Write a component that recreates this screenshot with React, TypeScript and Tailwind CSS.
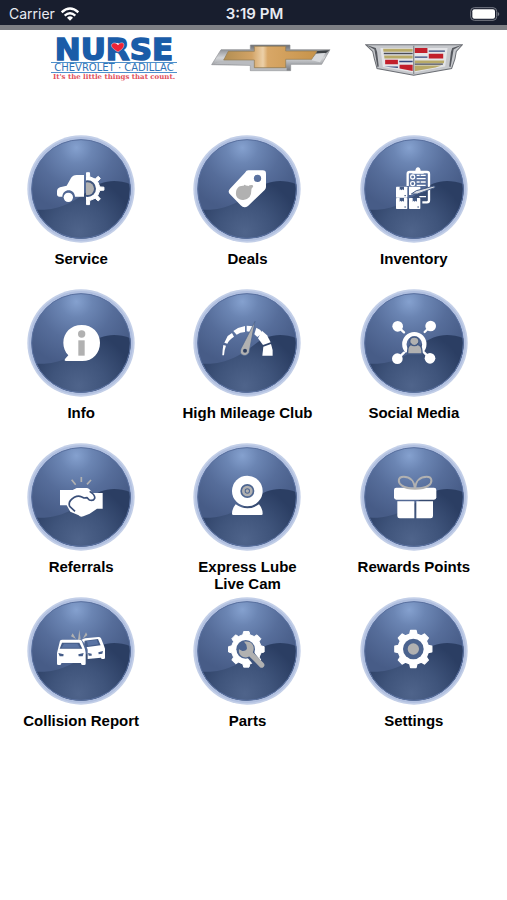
import type { ReactNode } from 'react';

const WHITE = '#ffffff';
const GREY = '#b1b1b1';

/** Builds the outline of a gear with flat, tapered teeth. */
function gearPath(cx: number, cy: number, outer: number, inner: number, teeth: number, tip = 0.19, base = 0.3): string {
  const step = (Math.PI * 2) / teeth;
  const points: string[] = [];
  for (let i = 0; i < teeth; i++) {
    const a = i * step - Math.PI / 2;
    const corners: [number, number][] = [
      [inner, -base],
      [outer, -tip],
      [outer, tip],
      [inner, base],
    ];
    corners.forEach(([r, f]) => {
      const t = a + f * step;
      points.push(`${(cx + r * Math.cos(t)).toFixed(1)} ${(cy + r * Math.sin(t)).toFixed(1)}`);
    });
  }
  return `M${points.join('L')}Z`;
}

function ServiceIcon() {
  return (
    <g transform="translate(-21 -15)" fill={WHITE}>
      <path d="M192 135h-22c-8 0-13 3-17 9l-13 23-20 5c-6 2-9 6-9 12v9c0 5 3 7 7 7h9c1-12 9-19 19-19s18 7 19 19h27z" />
      <circle cx="145" cy="202" r="14" />
      <clipPath id="half-gear">
        <rect x="198" y="120" width="70" height="110" />
      </clipPath>
      <g clipPath="url(#half-gear)">
        <path d={gearPath(204, 176, 48, 36, 8, 0.12, 0.18)} stroke={WHITE} strokeWidth="3" strokeLinejoin="round" />
        <circle cx="203" cy="176" r="25" fill="#40567f" />
        <circle cx="203" cy="176" r="19" fill={GREY} />
      </g>
    </g>
  );
}

function DealsIcon() {
  return (
    <g transform="translate(-24 -15)">
      <path
        fill={WHITE}
        fillRule="evenodd"
        d="M190 121h43q10 0 10 10v40q0 5-4 9l-50 48q-12 8-22-2l-32-33q-8-8 0-17l45-48q4-7 10-7zM217 134a11 11 0 1 0 1 22 11 11 0 0 0-1-22z"
      />
      <path
        fill={GREY}
        d="M176 167q3-5 7 0 5-2 6 2 5-5 13-4c4 2 3 7-1 9q-2 3-2 7 1 27-24 29c-15 1-24-10-22-23 1-12 8-21 23-20z"
      />
    </g>
  );
}

function Carton({ x, y }: { x: number; y: number }) {
  return (
    <g transform={`translate(${x} ${y})`}>
      <rect width="34" height="33" rx="2" fill={WHITE} />
      <path d="M11 0h13v11l-4-3-3 3-3-3-3 3z" fill="#435a84" />
      <path d="M25 27h5" stroke="#435a84" strokeWidth="3" />
    </g>
  );
}

function InventoryIcon() {
  return (
    <g transform="translate(-27 -15)">
      <path d="M170 168v-36q0-6 6-6h52q6 0 6 6v79q0 6-6 6h-14" fill="none" stroke={WHITE} strokeWidth="7" />
      <path d="M184 131v-8h9q1-11 8-11t8 11h9v8z" fill={WHITE} />
      <g fill="none" stroke={WHITE} strokeWidth="4">
        <rect x="179" y="135" width="12" height="12" rx="5" />
        <rect x="179" y="155" width="12" height="12" rx="5" />
        <path d="M197 136h9M209 136h15M197 146h27M197 156h9M209 156h15M197 166h27M205 200h20" />
      </g>
      <Carton x={135} y={170} />
      <Carton x={135} y={204} />
      <Carton x={174} y={204} />
      <path d="M174 170h34v13l-26 12h-8z" fill={WHITE} />
      <path d="m181 192 15-10 53-14q5 1 2 5l-52 19z" fill="#d9dce3" stroke="#435a84" strokeWidth="3" />
    </g>
  );
}

function InfoIcon() {
  return (
    <g transform="translate(-21 -12)">
      <path
        fill={WHITE}
        d="M185 120c32 0 55 23 55 53 0 31-21 55-53 55h-49c-4 0-5-3-3-6l10-11c-10-10-15-24-15-38 0-30 23-53 55-53z"
      />
      <circle cx="185" cy="147" r="11" fill={GREY} />
      <rect x="175" y="166" width="19" height="46" fill={GREY} />
    </g>
  );
}

function MileageIcon() {
  return (
    <g transform="translate(-24 -12)">
      <g fill={WHITE}>
        <path d="m112 211 1-17 2-14 8 2-4 14-2 15z" />
        <path d="m118 173 10-20 13-9 6 11q-16 11-20 21z" />
        <path d="m145 138 14-9 21-6v18q-15 1-25 8z" />
        <path d="m185 122 21 2-5 18-16-3z" />
        <path d="m214 128 12 7 6 10-15 11-9-8z" />
        <path d="m231 137 15 14 11 21-23 8-15-20z" />
        <path d="m235 185 23-8q7 18 5 35h-31z" />
      </g>
      <path d="m210 109-42 82q-5 13 3 18 12 7 21-6z" fill={GREY} stroke="#47608d" strokeWidth="2" />
      <circle cx="180" cy="197" r="6" fill="#2f4060" />
    </g>
  );
}

function SocialIcon() {
  return (
    <g transform="translate(-27 -12)">
      <g stroke={WHITE} strokeWidth="7" strokeLinecap="round">
        <path d="m140 124 19 18M239 123l-18 18M140 221l19-18M237 220l-18-18" />
      </g>
      <g fill={WHITE}>
        <circle cx="140" cy="124" r="16" />
        <circle cx="239" cy="123" r="16" />
        <circle cx="139" cy="221" r="16" />
        <circle cx="237" cy="220" r="16" />
      </g>
      <path d="M169 199a30 30 0 1 1 42 0" fill="none" stroke={WHITE} strokeWidth="13" />
      <path
        d="M170 207v-9q0-17 11-20-5-3-5-10 1-12 14-12t14 12q0 7-5 10 14 3 14 21v8z"
        fill={GREY}
        stroke="#435a84"
        strokeWidth="4"
        strokeLinejoin="round"
      />
      <path d="M178 176q12 12 24 0" fill="none" stroke="#435a84" strokeWidth="4" />
    </g>
  );
}

function ReferralsIcon() {
  return (
    <g transform="translate(-21 -9)">
      <g stroke={GREY} strokeWidth="5">
        <path d="m155 119 12 15M184 111v15M213 120l-12 13" />
      </g>
      <path
        fill={WHITE}
        d="M120 150h38l12-6h30q8 0 16 14l2 1h30v47h-17l-22 15-19 8q-9 4-14-3l-25-11-11-19h-20z"
      />
      <path
        fill="none"
        stroke="#3a4f79"
        strokeWidth="5"
        strokeLinejoin="round"
        d="M149 199c-4-10 2-20 14-27 7-4 14-5 21-2l8 4 9-1 7 7q12 4 16-5c2-8-4-14-15-21M149 199l16 15"
      />
    </g>
  );
}

function CameraIcon() {
  return (
    <g transform="translate(-24 -9)">
      <circle cx="187" cy="153" r="46" fill={WHITE} />
      <circle cx="187" cy="153" r="21" fill="#4e6690" />
      <circle cx="187" cy="153" r="12" fill="none" stroke={GREY} strokeWidth="8" />
      <circle cx="187" cy="153" r="5" fill={GREY} />
      <path fill={WHITE} d="M152 193q35 24 70 0 11 13 11 28 0 4-4 4h-84q-4 0-4-4 0-15 11-28z" />
    </g>
  );
}

function GiftIcon() {
  return (
    <g transform="translate(-522 -9)">
      <g fill={WHITE}>
        <rect x="624" y="143" width="127" height="36" rx="7" />
        <path d="M634 184h51v51h-44q-7 0-7-7zM691 184h50v44q0 7-7 7h-43z" />
      </g>
      <path
        fill="none"
        stroke={GREY}
        strokeWidth="6"
        strokeLinejoin="round"
        d="M687 146c-2-24-16-36-34-36-19 0-18 19-5 27 10 7 24 9 39 9zM687 146c2-24 16-36 35-36 18 0 18 18 5 27-10 7-25 9-40 9z"
      />
    </g>
  );
}

function CollisionIcon() {
  return (
    <g transform="translate(-21 -6)">
      <path d="m158 115 10 17-15-8zM178 104l4 29-8 2zM198 112l-10 20 14-12z" fill={GREY} />
      <g fill={WHITE}>
        <path d="M120 137q2-3 7-3h51q5 0 7 3l10 26 2 10v33q0 4-4 4h-6q-4 0-4-5v-1h-59v1q0 5-4 5h-5q-4 0-4-4v-32l3-12z" />
        <path d="m185 134 10-4 40-4q6 0 8 4l9 22 3 9v27q0 4-4 4h-4q-4 0-4-4l-40 4v-28l-5-13z" />
      </g>
      <g fill="#455d89">
        <path d="m126 143-7 18h68l-9-18zM194 137l-1 7 4 13 45-6-8-19z" />
        <path d="m115 174 16 4-1 6h-11zM191 174l-16 4 1 6h12zM204 174l11 2v6h-9zM249 168l-14 4 1 6 11-2z" />
      </g>
      <path d="m132 146-7 12h55l-8-12zM201 138l3 14 31-4-5-13z" fill="#5a74a4" />
    </g>
  );
}

function PartsIcon() {
  return (
    <g transform="translate(-24 -6)">
      <path d={gearPath(184, 163, 54, 45, 8)} fill={WHITE} stroke={WHITE} strokeWidth="3" strokeLinejoin="round" />
      <circle cx="182" cy="163" r="28" fill="#4c6490" />
      <path d="m185 165 45 55" stroke="#3e547e" strokeWidth="25" />
      <path d="m191 171 39 39" stroke={GREY} strokeWidth="16" strokeLinecap="round" />
      <path
        fill={GREY}
        d="M177 140c17-4 31 7 29 23-2 15-14 27-29 24-11-3-17-13-15-24l10 5q12 1 14-8l-2-11z"
      />
    </g>
  );
}

function SettingsIcon() {
  return (
    <g transform="translate(-522 -6)">
      <path d={gearPath(682, 162, 56, 46, 8)} fill={WHITE} stroke={WHITE} strokeWidth="4" strokeLinejoin="round" />
      <circle cx="682" cy="162" r="31" fill="#4b638e" />
      <circle cx="682" cy="162" r="17" fill={GREY} />
    </g>
  );
}

type Tile = { label: string; icon: ReactNode };

const tiles: Tile[] = [
  { label: 'Service', icon: <ServiceIcon /> },
  { label: 'Deals', icon: <DealsIcon /> },
  { label: 'Inventory', icon: <InventoryIcon /> },
  { label: 'Info', icon: <InfoIcon /> },
  { label: 'High Mileage Club', icon: <MileageIcon /> },
  { label: 'Social Media', icon: <SocialIcon /> },
  { label: 'Referrals', icon: <ReferralsIcon /> },
  { label: 'Express Lube Live Cam', icon: <CameraIcon /> },
  { label: 'Rewards Points', icon: <GiftIcon /> },
  { label: 'Collision Report', icon: <CollisionIcon /> },
  { label: 'Parts', icon: <PartsIcon /> },
  { label: 'Settings', icon: <SettingsIcon /> },
];

function BadgeGradients() {
  return (
    <svg className="absolute size-0" aria-hidden="true">
      <defs>
        <radialGradient id="badge-sky" gradientUnits="userSpaceOnUse" cx="148" cy="38" r="190">
          <stop offset="0" stopColor="#85a1cf" />
          <stop offset="0.25" stopColor="#6b85b3" />
          <stop offset="0.6" stopColor="#566d9a" />
          <stop offset="1" stopColor="#475c87" />
        </radialGradient>
        <radialGradient id="badge-wave" gradientUnits="userSpaceOnUse" cx="155" cy="290" r="165">
          <stop offset="0" stopColor="#4f648b" />
          <stop offset="0.5" stopColor="#3f547b" />
          <stop offset="1" stopColor="#2b3e63" />
        </radialGradient>
        <clipPath id="badge-face">
          <circle cx="162" cy="162" r="149" />
        </clipPath>
      </defs>
    </svg>
  );
}

function Badge({ children }: { children: ReactNode }) {
  return (
    <svg viewBox="0 0 324 324" className="size-[108px]" aria-hidden="true">
      <circle cx="162" cy="162" r="161" fill="#c3cfe8" />
      <circle cx="162" cy="162" r="156" fill="#b1c0e0" />
      <g clipPath="url(#badge-face)">
        <circle cx="162" cy="162" r="149" fill="url(#badge-sky)" />
        <path
          d="M0 220q22 6 52 4c60-4 94-29 132-57 38-29 80-40 140-14v171H0z"
          fill="url(#badge-wave)"
        />
      </g>
      <circle cx="162" cy="162" r="148" fill="none" stroke="#5a71a0" strokeWidth="3" />
      {children}
    </svg>
  );
}

function NurseLogo() {
  return (
    <svg viewBox="0 -8 126 51" className="h-[51px] w-[126px]" role="img" aria-label="Nurse Chevrolet Cadillac">
      <text
        x="63"
        y="22"
        textAnchor="middle"
        className="font-['DejaVu_Sans',sans-serif] text-[31px] font-bold"
        fill="#1a5ca8"
        stroke="#1a5ca8"
        strokeWidth="1.5"
      >
        NURSE
      </text>
      <path d="M67 14c-5-3-8-6-6-8s5-1 6 1c2-3 6-3 6 0s-3 5-6 7z" fill="#ee2436" stroke="#ffffff" strokeWidth="0.4" />
      <path d="M0 24.500h126M0 34.500h126" stroke="#4e90cb" strokeWidth="1" />
      <text
        x="63"
        y="33"
        textAnchor="middle"
        className="font-['DejaVu_Sans',sans-serif] text-[10px]"
        fill="#2f74b8"
      >
        CHEVROLET · CADILLAC
      </text>
      <text
        x="63"
        y="41"
        textAnchor="middle"
        className="font-['DejaVu_Serif',serif] text-[7px] font-bold"
        fill="#e2515c"
      >
        It's the little things that count.
      </text>
    </svg>
  );
}

function ChevroletLogo() {
  return (
    <svg viewBox="0 0 360 90" className="h-[30px] w-[120px]" role="img" aria-label="Chevrolet">
      <defs>
        <linearGradient id="chrome" x1="0" y1="0" x2="0" y2="1">
          <stop offset="0" stopColor="#6c6e73" />
          <stop offset="0.5" stopColor="#d3d5d8" />
          <stop offset="1" stopColor="#77797e" />
        </linearGradient>
        <linearGradient id="bowtie-gold" x1="0" y1="0" x2="1" y2="0">
          <stop offset="0" stopColor="#b28e52" />
          <stop offset="0.3" stopColor="#d2a366" />
          <stop offset="0.42" stopColor="#ecd0a8" />
          <stop offset="0.47" stopColor="#d8a767" />
          <stop offset="1" stopColor="#c79349" />
        </linearGradient>
      </defs>
      <path
        d="M2 65 30 20h88V6h119v14h120l-25 44h-93v19H118V67z"
        fill="url(#chrome)"
        stroke="#8c8e92"
        strokeWidth="2"
      />
      <path d="m10 62 28-9h92v22h97v8H118V66z" fill="#b9bbbf" />
      <path d="M38 51 52 25h78V10h94v14h95l-17 25h-78v25h-94V51z" fill="url(#bowtie-gold)" stroke="#8f7a52" strokeWidth="2" />
      <path d="m319 24 36-2-10 8-30 2z" fill="#3e4246" />
      <path d="m316 32 27-2-16 28-25-6z" fill="#d8dadd" />
    </svg>
  );
}

function CadillacLogo() {
  return (
    <svg viewBox="0 0 292 98" className="h-[33px] w-[98px]" role="img" aria-label="Cadillac">
      <path d="M2 5h288l-18 20-4 22-10 29-113 20L36 76 28 47l-5-22z" fill="#c6c8cc" stroke="#6c6f75" strokeWidth="3" />
      <path d="m2 5 26 14 9 52 4-1-5-43-4-12zM290 5l-26 14-9 52-4-1 5-43 4-12z" fill="#55585e" />
      <path d="M46 15h200l-7 55-94 18-92-17z" fill="#e4e5e8" />
      <path d="M54 17h88v9H55zM57 37h85v9H58zM148 52h88l-1 8h-87zM148 67h80l-18 6-62 11z" fill="#b8aa68" />
      <path d="M56 29h86v4H56zM148 61h84v4h-84z" fill="#4a4c55" />
      <path d="M148 15h38v15h-38zM190 32h43v14h-43zM60 50h38v13H60zM103 65h39v18l-39-7z" fill="#c21f2b" />
      <path d="M190 22h48v4h-48zM148 40h38v4h-38zM102 53h40v4h-40zM57 70h41v4z" fill="#34477d" />
      <path d="M145 8v84" stroke="#8b8e93" strokeWidth="4" />
    </svg>
  );
}

function StatusBar() {
  return (
    <div className="grid h-[30px] grid-cols-3 items-center border-b-[5px] border-[#7d7f84] bg-[#181e2e] pr-[7px] pl-[9px] pt-[2px] font-[Inter,sans-serif] text-[14px] leading-[18px] text-[#e8ebf2]">
      <div className="flex items-center gap-[6px]">
        <span>Carrier</span>
        <svg viewBox="0 0 54 42" className="h-[14px] w-[18px]" aria-hidden="true">
          <g fill="none" stroke="#ffffff" strokeWidth="7">
            <path d="M2 16q25-23 50 0M11 26q16-14 32 0" />
          </g>
          <path d="M18 32q9-8 18 0l-9 9z" fill="#ffffff" />
        </svg>
      </div>
      <span className="text-center text-[15px] font-semibold">3:19 PM</span>
      <svg viewBox="0 0 90 42" className="h-[14px] w-[30px] justify-self-end" aria-hidden="true">
        <rect x="2" y="2" width="78" height="38" rx="11" fill="none" stroke="#777b86" strokeWidth="3" />
        <rect x="7" y="7" width="68" height="28" rx="6" fill="#ffffff" />
        <path d="M83 14q10 7 0 14z" fill="#777b86" />
      </svg>
    </div>
  );
}

export default function App() {
  return (
    <div className="min-h-screen bg-white font-['Liberation_Sans',Arial,sans-serif] text-black">
      <StatusBar />
      <BadgeGradients />
      <header className="flex items-start gap-[34px] pb-[54px] pl-[51px]">
        <NurseLogo />
        <div className="pt-[13px]">
          <ChevroletLogo />
        </div>
        <div className="pt-[13px]">
          <CadillacLogo />
        </div>
      </header>
      <main className="grid auto-rows-[154px] grid-cols-3 gap-x-5 pr-5 pl-2">
        {tiles.map((tile) => (
          <button key={tile.label} type="button" className="flex cursor-pointer flex-col items-center gap-[7px]">
            <Badge>{tile.icon}</Badge>
            <span className="max-w-[130px] text-center text-[15px] leading-[17px] font-bold">{tile.label}</span>
          </button>
        ))}
      </main>
    </div>
  );
}
